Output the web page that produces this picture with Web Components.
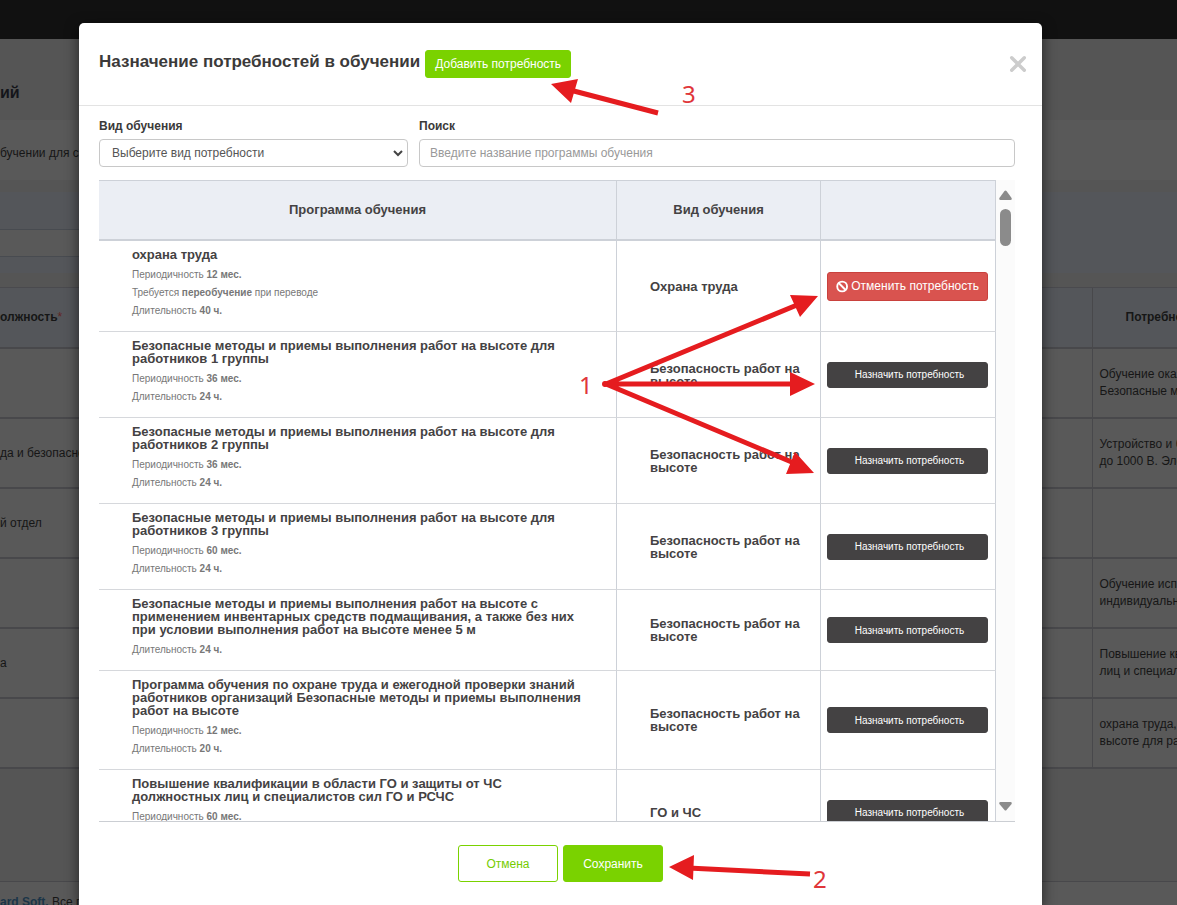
<!DOCTYPE html>
<html lang="ru">
<head>
<meta charset="utf-8">
<meta name="viewport" content="width=device-width, initial-scale=1">
<title>Назначение потребностей в обучении</title>
<style>
  html, body { margin: 0; }
  body { font-family: "Liberation Sans", Arial, sans-serif; font-size: 12px; color: #333; background: #555; }
</style>
</head>
<body>
<training-app></training-app>

<script>
const define = (name, html, setup) => {
  const template = document.createElement('template');
  template.innerHTML = html;
  customElements.define(name, class extends HTMLElement {
    connectedCallback() {
      if (this.shadowRoot) return;
      this.attachShadow({ mode: 'open' }).append(template.content.cloneNode(true));
      if (setup) setup.call(this, this.shadowRoot);
    }
  });
};

/* Push button: primary, outline, dark and danger looks, small to large sizes */
define('ui-button', `
  <style>
    :host { display: inline-block; }
    button {
      box-sizing: border-box; width: 100%; height: 28px; margin: 0; padding: 0 9px;
      display: flex; align-items: center; justify-content: center; gap: 3px;
      border: 1px solid #7ad200; border-radius: 3px; background: #7ad200; color: #fff;
      font: 12px "Liberation Sans", Arial, sans-serif; white-space: nowrap; cursor: pointer;
    }
    :host([size="large"]) button { height: 37px; }
    :host([kind="outline"]) button { background: #fff; color: #76cc00; }
    :host([kind="dark"]) button { height: 26px; font-size: 10px; background: #444243; border-color: #444243; padding: 0 8px; padding-left: 12px; }
    :host([kind="danger"]) button { height: 29px; background: #d9534f; border-color: #c9413d; padding: 0 8px; }
  </style>
  <button type="button"><slot name="icon"></slot><slot></slot></button>`);

/* Dimmed page behind the dialog */
define('page-backdrop', `
  <style>
    :host { display: flex; flex-direction: column; background: #555; color: #161616; overflow: hidden; }
    header { height: 39px; background: #111; }
    h2 { margin: 0; height: 81px; padding-top: 44px; box-sizing: border-box; font-size: 16px; line-height: 20px; color: #14151a; }
    p { margin: 0; height: 60px; line-height: 66px; background: #595959; white-space: nowrap; }
    .filters { margin-top: 12px; height: 81px; margin-bottom: 14px; background: #54565a; display: grid; grid-template-columns: 79px 1fr; }
    .filters div { margin: 37px 0 16px; background: #595959; border: 1px solid #484b50; border-width: 1px 0; }
    table { width: 100%; border-collapse: collapse; table-layout: fixed; background: #595959; }
    col.post { width: 79px; } col.need { width: 85px; }
    th { height: 57px; background: #54565a; padding: 0 0 2px; text-align: left; white-space: nowrap; }
    td { height: 68px; padding: 0; line-height: 17px; white-space: nowrap; overflow: hidden; }
    th, td { border-top: 1px solid #4a4a4e; border-bottom: 2px solid #48484b; }
    th:first-child, td:first-child { overflow: hidden; }
    th:last-child { border-left: 1px solid #48484b; padding-left: 33px; overflow: hidden; }
    td:last-child { border-left: 1px solid #48484b; padding-left: 7px; }
    th i { color: #612424; font-style: normal; font-weight: 400; }
    footer { margin-top: auto; height: 24px; padding-top: 12px; box-sizing: border-box; line-height: 17px; border-top: 1px solid #48484b; background: #595959; }
    footer a { color: #1b3548; font-weight: 700; text-decoration: none; }
  </style>
  <header></header>
  <h2>ий</h2>
  <p>бучении для с</p>
  <div class="filters"><div></div></div>
  <table>
    <colgroup><col class="post"><col><col class="need"></colgroup>
    <thead><tr><th>олжность<i>*</i></th><th></th><th>Потребно</th></tr></thead>
    <tbody></tbody>
  </table>
  <footer><a href="#">ard Soft.</a> Все п</footer>`, function (root) {
  const rows = [
    ['', 'Обучение оказ<br>Безопасные ме'],
    ['да и безопасно', 'Устройство и б<br>до 1000 В. Эле'],
    ['й отдел', ''],
    ['', 'Обучение испо<br>индивидуально'],
    ['а', 'Повышение кв<br>лиц и специал'],
    ['', 'охрана труда,<br>высоте для раб'],
  ];
  root.querySelector('tbody').innerHTML = rows.map(([post, need]) =>
    `<tr><td>${post}</td><td></td><td>${need}</td></tr>`).join('');
});

/* Dialog frame with title, action and close button */
define('modal-dialog', `
  <style>
    :host { display: flex; flex-direction: column; background: #fff; border-radius: 5px 5px 0 0; box-shadow: 0 4px 14px rgba(0,0,0,.6); }
    header { display: flex; align-items: center; height: 82px; padding: 0 15px 0 20px; border-bottom: 1px solid #e3e3e3; }
    h1 { margin: 0 5px 4px 0; font-size: 17px; line-height: 20px; color: #3b3a3a; white-space: nowrap; }
    .close { margin-left: auto; padding: 0; width: 18px; height: 18px; border: 0; background: none; cursor: pointer; }
    .close svg { display: block; }
    .body { padding: 11px 27px 0 20px; }
    footer { display: flex; justify-content: center; gap: 5px; padding: 23px 0; }
  </style>
  <header>
    <h1><slot name="title"></slot></h1>
    <slot name="action"></slot>
    <button class="close" type="button" aria-label="Закрыть">
      <svg width="18" height="18" viewBox="0 0 18 18" fill="none" stroke="#ccc" stroke-width="3.400" stroke-linecap="round"><path d="M2.700 2.700 15.300 15.300M15.300 2.700 2.700 15.300"/></svg>
    </button>
  </header>
  <div class="body"><slot></slot></div>
  <footer><slot name="footer"></slot></footer>`);

/* Kind and search filters */
define('program-filter', `
  <style>
    :host { display: grid; grid-template-columns: minmax(0, 309fr) minmax(0, 596fr); gap: 11px; margin-bottom: 13px; }
    label { display: block; margin-bottom: 4px; line-height: 18px; font-weight: 700; color: #3b3a3a; }
    .select { display: grid; align-items: center; }
    .select > * { grid-area: 1 / 1; }
    svg { justify-self: end; margin-right: 5px; pointer-events: none; }
    select, input {
      box-sizing: border-box; width: 100%; height: 28px; margin: 0; padding: 0 10px; border: 1px solid #c8c8c8; border-radius: 4px;
      font: 12px "Liberation Sans", Arial, sans-serif; color: #555; background: #fff; appearance: none; outline: 0;
    }
    select { padding: 0 24px 0 12px; }
    input::placeholder { color: #999; opacity: 1; }
  </style>
  <div>
    <label for="kind">Вид обучения</label>
    <div class="select">
      <select id="kind"><option>Выберите вид потребности</option></select>
      <svg width="10" height="7" viewBox="0 0 10 7" fill="none" stroke="#444" stroke-width="2"><path d="M1 1 5 5 9 1"/></svg>
    </div>
  </div>
  <div>
    <label for="search">Поиск</label>
    <input id="search" type="text" placeholder="Введите название программы обучения">
  </div>`);

define('program-table', `
  <style>
    :host { display: flex; height: 641px; overflow: hidden; border-bottom: 1px solid #cbced3; }
    .view { flex: 1; overflow: hidden; }
    table { width: 100%; border-spacing: 0; table-layout: fixed; color: #444243; }
    col.kind { width: 204px; } col.act { width: 175px; }
    th, td { box-sizing: border-box; border-right: 1px solid #cdd1d8; border-bottom: 1px solid #d6d8dc; padding: 7px 25px 11px 33px; text-align: left; font-size: 13px; line-height: 13px; font-weight: 700; }
    th { height: 61px; padding: 0 0 2px; text-align: center; background: #ebeef4; border-top: 1px solid #cdd1d8; border-bottom: 2px solid #cdd1d8; }
    td.kind { padding: 7px 12px 7px 33px; }
    td.act { padding: 0 7px 0 6px; }
    ui-button { display: block; }
    strong { display: block; margin-bottom: 5px; }
    p { margin: 0; font-size: 10px; line-height: 18px; font-weight: 400; color: #777; }
    .bar { width: 19px; box-sizing: border-box; padding: 10px 4px 9px; background: #fbfbfb; display: flex; flex-direction: column; align-items: center; }
    .thumb { width: 11px; height: 37px; margin: 8px 0 auto; border-radius: 6px; background: #8b8b8b; }
  </style>
  <div class="view">
    <table>
      <colgroup><col><col class="kind"><col class="act"></colgroup>
      <thead><tr><th>Программа обучения</th><th>Вид обучения</th><th></th></tr></thead>
      <tbody></tbody>
    </table>
  </div>
  <div class="bar">
    <svg width="13" height="11" viewBox="0 0 13 11" fill="#8b8b8b"><path d="M5.5 1Q6.500 0 7.500 1L12.600 8Q13.200 10 11.500 10H1.500Q-.2 10 .4 8Z"/></svg>
    <div class="thumb"></div>
    <svg width="13" height="11" viewBox="0 0 13 11" fill="#8b8b8b"><path d="M5.500 9Q6.500 10 7.500 9L12.600 3Q13.200 1 11.500 1H1.500Q-.2 1 .4 3Z"/></svg>
  </div>`, function (root) {
  const height = 'Безопасность работ на высоте';
  const rows = [
    ['охрана труда', 'Охрана труда', ['Периодичность <b>12 мес.</b>', 'Требуется <b>переобучение</b> при переводе', 'Длительность <b>40 ч.</b>'], true],
    ['Безопасные методы и приемы выполнения работ на высоте для работников 1 группы', height, ['Периодичность <b>36 мес.</b>', 'Длительность <b>24 ч.</b>']],
    ['Безопасные методы и приемы выполнения работ на высоте для работников 2 группы', height, ['Периодичность <b>36 мес.</b>', 'Длительность <b>24 ч.</b>']],
    ['Безопасные методы и приемы выполнения работ на высоте для работников 3 группы', height, ['Периодичность <b>60 мес.</b>', 'Длительность <b>24 ч.</b>']],
    ['Безопасные методы и приемы выполнения работ на высоте с применением инвентарных средств подмащивания, а также без них при условии выполнения работ на высоте менее 5 м', height, ['Длительность <b>24 ч.</b>']],
    ['Программа обучения по охране труда и ежегодной проверки знаний работников организаций Безопасные методы и приемы выполнения работ на высоте', height, ['Периодичность <b>12 мес.</b>', 'Длительность <b>20 ч.</b>']],
    ['Повышение квалификации в области ГО и защиты от ЧС должностных лиц и специалистов сил ГО и РСЧС', 'ГО и ЧС', ['Периодичность <b>60 мес.</b>', '&nbsp;']],
  ];
  const ban = '<svg slot="icon" width="13" height="13" viewBox="0 0 13 13" fill="none" stroke="#fff" stroke-width="2"><circle cx="6.500" cy="6.500" r="5.200"/><path d="M2.800 2.800 10.200 10.200"/></svg>';
  root.querySelector('tbody').innerHTML = rows.map(([name, kind, notes, assigned]) => `
    <tr>
      <td><strong>${name}</strong>${notes.map(n => `<p>${n}</p>`).join('')}</td>
      <td class="kind">${kind}</td>
      <td class="act">${assigned
        ? `<ui-button kind="danger">${ban}Отменить потребность</ui-button>`
        : '<ui-button kind="dark">Назначить потребность</ui-button>'}</td>
    </tr>`).join('');
});

/* Numbered arrows drawn over the dialog */
define('guide-marks', `
  <style>
    :host { position: absolute; top: 0; left: 0; pointer-events: none; }
    svg { display: block; }
    text { font: 24px "Noto Sans", sans-serif; fill: #e0363a; }
  </style>
  <svg width="1177" height="905" viewBox="0 0 1177 905" fill="#e51c1f">
    <path stroke="#e51c1f" stroke-width="5" fill="none" d="M658 113 570 90M810 874 688 868M606 384 797 305M604 384H795M606 384 794 463"/>
    <path d="M551 84 578 79 571 103ZM669 867 694 855 693 880ZM818 296 790 295 800 317ZM815 384 790 372V396ZM814 473 795 452 786 474Z"/>
    <circle cx="605" cy="384" r="3"/>
    <text x="579" y="394">1</text>
    <text x="813" y="888">2</text>
    <text x="682" y="103">3</text>
  </svg>`);

define('training-app', `
  <style>
    :host { display: grid; position: relative; min-height: 100vh; overflow: hidden; }
    page-backdrop, .stage { grid-area: 1 / 1; min-width: 0; }
    .stage { display: grid; padding: 23px 135px 0 79px; z-index: 1; }
    guide-marks { z-index: 2; }
    .wide { width: 100px; }
  </style>
  <page-backdrop></page-backdrop>
  <div class="stage">
    <modal-dialog role="dialog" aria-modal="true">
      <span slot="title">Назначение потребностей в обучении</span>
      <ui-button slot="action">Добавить потребность</ui-button>
      <program-filter></program-filter>
      <program-table></program-table>
      <ui-button slot="footer" class="wide" kind="outline" size="large">Отмена</ui-button>
      <ui-button slot="footer" class="wide" size="large">Сохранить</ui-button>
    </modal-dialog>
  </div>
  <guide-marks></guide-marks>`);
</script>
</body>
</html>
